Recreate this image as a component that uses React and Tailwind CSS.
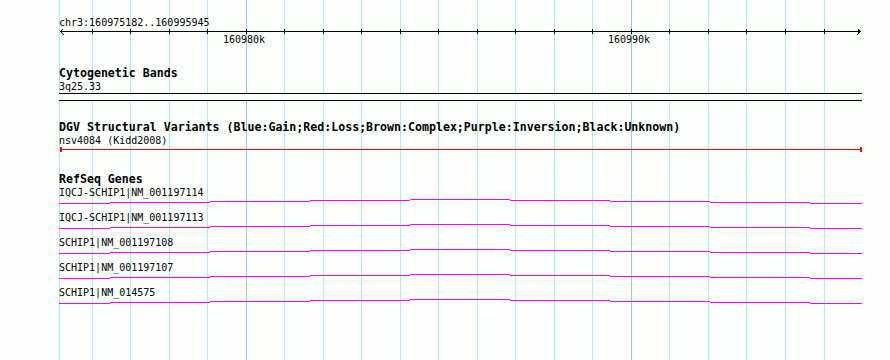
import React from "react";

const GRID = [59, 92, 130, 169, 207, 246, 284, 323, 361, 400, 438, 477, 515, 554, 592, 631, 669, 708, 746, 785, 824];
const MAJOR = [246, 631];
const LEFT = 59;

// stepped "hat" intron line, as the GD renderer draws it
const HAT = [
  [59, 110, 4],
  [110, 210, 3],
  [210, 310, 2],
  [310, 410, 1],
  [410, 510, 0],
  [510, 610, 1],
  [610, 710, 2],
  [710, 810, 3],
  [810, 862, 4],
];

const genes = [
  "IQCJ-SCHIP1|NM_001197114",
  "IQCJ-SCHIP1|NM_001197113",
  "SCHIP1|NM_001197108",
  "SCHIP1|NM_001197107",
  "SCHIP1|NM_014575",
];

function Grid() {
  return (
    <svg className="absolute inset-0" width="890" height="360" shapeRendering="crispEdges">
      {GRID.map((x) => (
        <rect key={x} x={x} y={0} width={1} height={360} fill={MAJOR.includes(x) ? "#92cbe6" : "#b0eaf0"} />
      ))}
    </svg>
  );
}

function Title({ children }) {
  return <div className="h-[13px] leading-[13px] text-[11.6px] font-bold whitespace-nowrap">{children}</div>;
}

function Label({ children }) {
  return <div className="h-[13px] leading-[13px] text-[10px] whitespace-nowrap">{children}</div>;
}

function Ruler() {
  return (
    <div className="relative h-[38px]">
      <svg className="absolute left-0 top-0" width="803" height="8" shapeRendering="crispEdges">
        <rect x={1} y={2} width={801} height={1} fill="#000" />
        {GRID.slice(1).map((x) => (
          <rect key={x} x={x - LEFT} y={0} width={1} height={5} fill="#000" />
        ))}
        <polyline points="5,-1 2,2.5 5,6" fill="none" stroke="#000" strokeWidth="1" />
        <polyline points="798,-1 801,2.5 798,6" fill="none" stroke="#000" strokeWidth="1" />
      </svg>
      <span className="absolute left-[164px] top-[4px] leading-[13px] text-[10px]">160980k</span>
      <span className="absolute left-[549px] top-[4px] leading-[13px] text-[10px]">160990k</span>
    </div>
  );
}

function GeneRow({ name }) {
  return (
    <div>
      <Label>{name}</Label>
      <svg width="803" height="12" className="block" shapeRendering="crispEdges">
        {HAT.map(([a, b, y]) => (
          <rect key={a} x={a - LEFT} y={y} width={b - a} height={1} fill="#ff00ff" />
        ))}
      </svg>
    </div>
  );
}

export default function App() {
  return (
    <div className="relative w-[890px] h-[360px] overflow-hidden bg-[#fcfffc] text-black font-['DejaVu_Sans_Mono',monospace]">
      <Grid />

      <div className="relative ml-[59px] w-[803px] pt-[16px]">
        {/* ruler */}
        <Label>chr3:160975182..160995945</Label>
        <Ruler />

        {/* cytogenetic bands */}
        <Title>Cytogenetic Bands</Title>
        <Label>3q25.33</Label>
        <div className="h-[8px] border-y border-black bg-[#fcfffc]" />

        {/* DGV */}
        <div className="mt-[20px]">
          <Title>DGV Structural Variants (Blue:Gain;Red:Loss;Brown:Complex;Purple:Inversion;Black:Unknown)</Title>
          <Label>nsv4084 (Kidd2008)</Label>
          <svg width="803" height="6" className="block" shapeRendering="crispEdges">
            <rect x={1} y={2} width={802} height={1} fill="#ff0000" />
            <rect x={1} y={0} width={2} height={5} fill="#ff0000" />
            <rect x={801} y={0} width={2} height={5} fill="#ff0000" />
          </svg>
        </div>

        {/* RefSeq */}
        <div className="mt-[20px]">
          <Title>RefSeq Genes</Title>
          {genes.map((g) => (
            <GeneRow key={g} name={g} />
          ))}
        </div>
      </div>
    </div>
  );
}
